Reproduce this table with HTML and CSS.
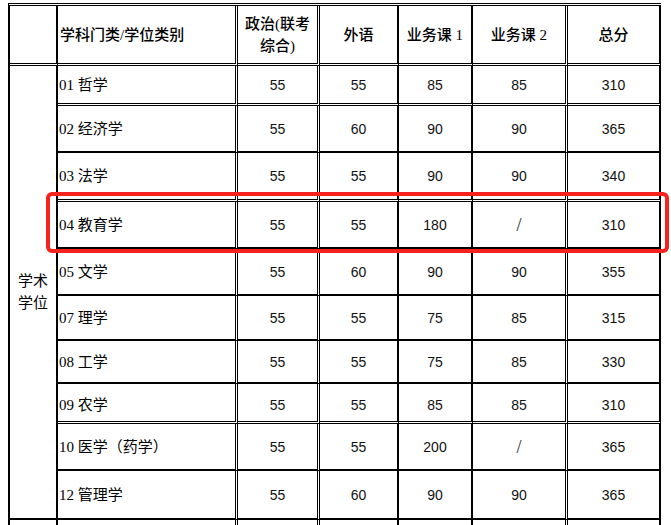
FILE: index.html
```html
<!DOCTYPE html>
<html lang="zh">
<head>
<meta charset="utf-8">
<title>分数线</title>
<link rel="stylesheet" href="styles.css">
</head>
<body>
<div class="wrap">
  <div class="grid">
    <div class="c h c1"></div>
    <div class="c h c2 left">学科门类/学位类别</div>
    <div class="c h c3">政治(联考<br>综合)</div>
    <div class="c h c4">外语</div>
    <div class="c h c5">业务课 1</div>
    <div class="c h c6">业务课 2</div>
    <div class="c h c7">总分</div>

    <div class="c c1 merged">学术<br>学位</div>

    <div class="c c2 left dbl">01 哲学</div><div class="c c3 n dbl">55</div><div class="c c4 n dbl">55</div><div class="c c5 n dbl">85</div><div class="c c6 n dbl">85</div><div class="c c7 n dbl">310</div>
    <div class="c c2 left">02 经济学</div><div class="c c3 n">55</div><div class="c c4 n">60</div><div class="c c5 n">90</div><div class="c c6 n">90</div><div class="c c7 n">365</div>
    <div class="c c2 left dbl">03 法学</div><div class="c c3 n dbl">55</div><div class="c c4 n dbl">55</div><div class="c c5 n dbl">90</div><div class="c c6 n dbl">90</div><div class="c c7 n dbl">340</div>
    <div class="c c2 left">04 教育学</div><div class="c c3 n">55</div><div class="c c4 n">55</div><div class="c c5 n">180</div><div class="c c6 slash">/</div><div class="c c7 n">310</div>
    <div class="c c2 left">05 文学</div><div class="c c3 n">55</div><div class="c c4 n">60</div><div class="c c5 n">90</div><div class="c c6 n">90</div><div class="c c7 n">355</div>
    <div class="c c2 left">07 理学</div><div class="c c3 n">55</div><div class="c c4 n">55</div><div class="c c5 n">75</div><div class="c c6 n">85</div><div class="c c7 n">315</div>
    <div class="c c2 left">08 工学</div><div class="c c3 n">55</div><div class="c c4 n">55</div><div class="c c5 n">75</div><div class="c c6 n">85</div><div class="c c7 n">330</div>
    <div class="c c2 left dbl low">09 农学</div><div class="c c3 n dbl low">55</div><div class="c c4 n dbl low">55</div><div class="c c5 n dbl low">85</div><div class="c c6 n dbl low">85</div><div class="c c7 n dbl low">310</div>
    <div class="c c2 left">10 医学（药学）</div><div class="c c3 n">55</div><div class="c c4 n">55</div><div class="c c5 n">200</div><div class="c c6 slash">/</div><div class="c c7 n">365</div>
    <div class="c c2 left">12 管理学</div><div class="c c3 n">55</div><div class="c c4 n">60</div><div class="c c5 n">90</div><div class="c c6 n">90</div><div class="c c7 n">365</div>

    <div class="c c1"></div><div class="c c2"></div><div class="c c3"></div><div class="c c4"></div><div class="c c5"></div><div class="c c6"></div><div class="c c7"></div>
  </div>
  <div class="highlight"></div>
</div>
</body>
</html>
```

FILE: styles.css
```css
html, body {
  margin: 0;
  padding: 0;
  background: #fff;
}
body {
  font-family: "Liberation Serif", "Noto Sans CJK SC", serif;
  font-size: 15px;
  color: #000;
}
.wrap {
  position: relative;
  padding: 3px 0 0 8px;
}
.grid {
  display: grid;
  width: 653px;
  box-sizing: border-box;
  border-top: 3px double #000;
  border-left: 2px solid #000;
  grid-template-columns: 48px 180px 82px 79px 74px 95px 93px;
  grid-template-rows: 60px 40px 47px 49px 47px 47px 45px 43px 40px 47px 49px 40px;
}
.c {
  box-sizing: border-box;
  border-bottom: 2px solid #000;
  border-right: 2px solid #000;
  display: flex;
  align-items: center;
  justify-content: center;
  text-align: center;
  line-height: 22px;
}
.c2, .c3, .c6 { border-right: 3px double #000; }
.h {
  border-bottom: 3px double #000;
  font-weight: 500;
}
.dbl { border-bottom: 3px double #000; }
.low { padding-top: 5px; }
.left {
  justify-content: flex-start;
  text-align: left;
  padding-left: 1px;
}
.h.left { padding-left: 2px; }
.merged {
  grid-column: 1;
  grid-row: 2 / span 10;
}
.n {
  font-family: "Liberation Sans", "Noto Sans CJK SC", sans-serif;
  font-size: 14px;
  color: #111;
}
.slash {
  font-family: "Liberation Serif", serif;
  font-size: 18px;
  color: #222;
}
.highlight {
  position: absolute;
  left: 46px;
  top: 192px;
  width: 623px;
  height: 61px;
  box-sizing: border-box;
  border: 4px solid #f5221e;
  border-radius: 6px;
}
```
